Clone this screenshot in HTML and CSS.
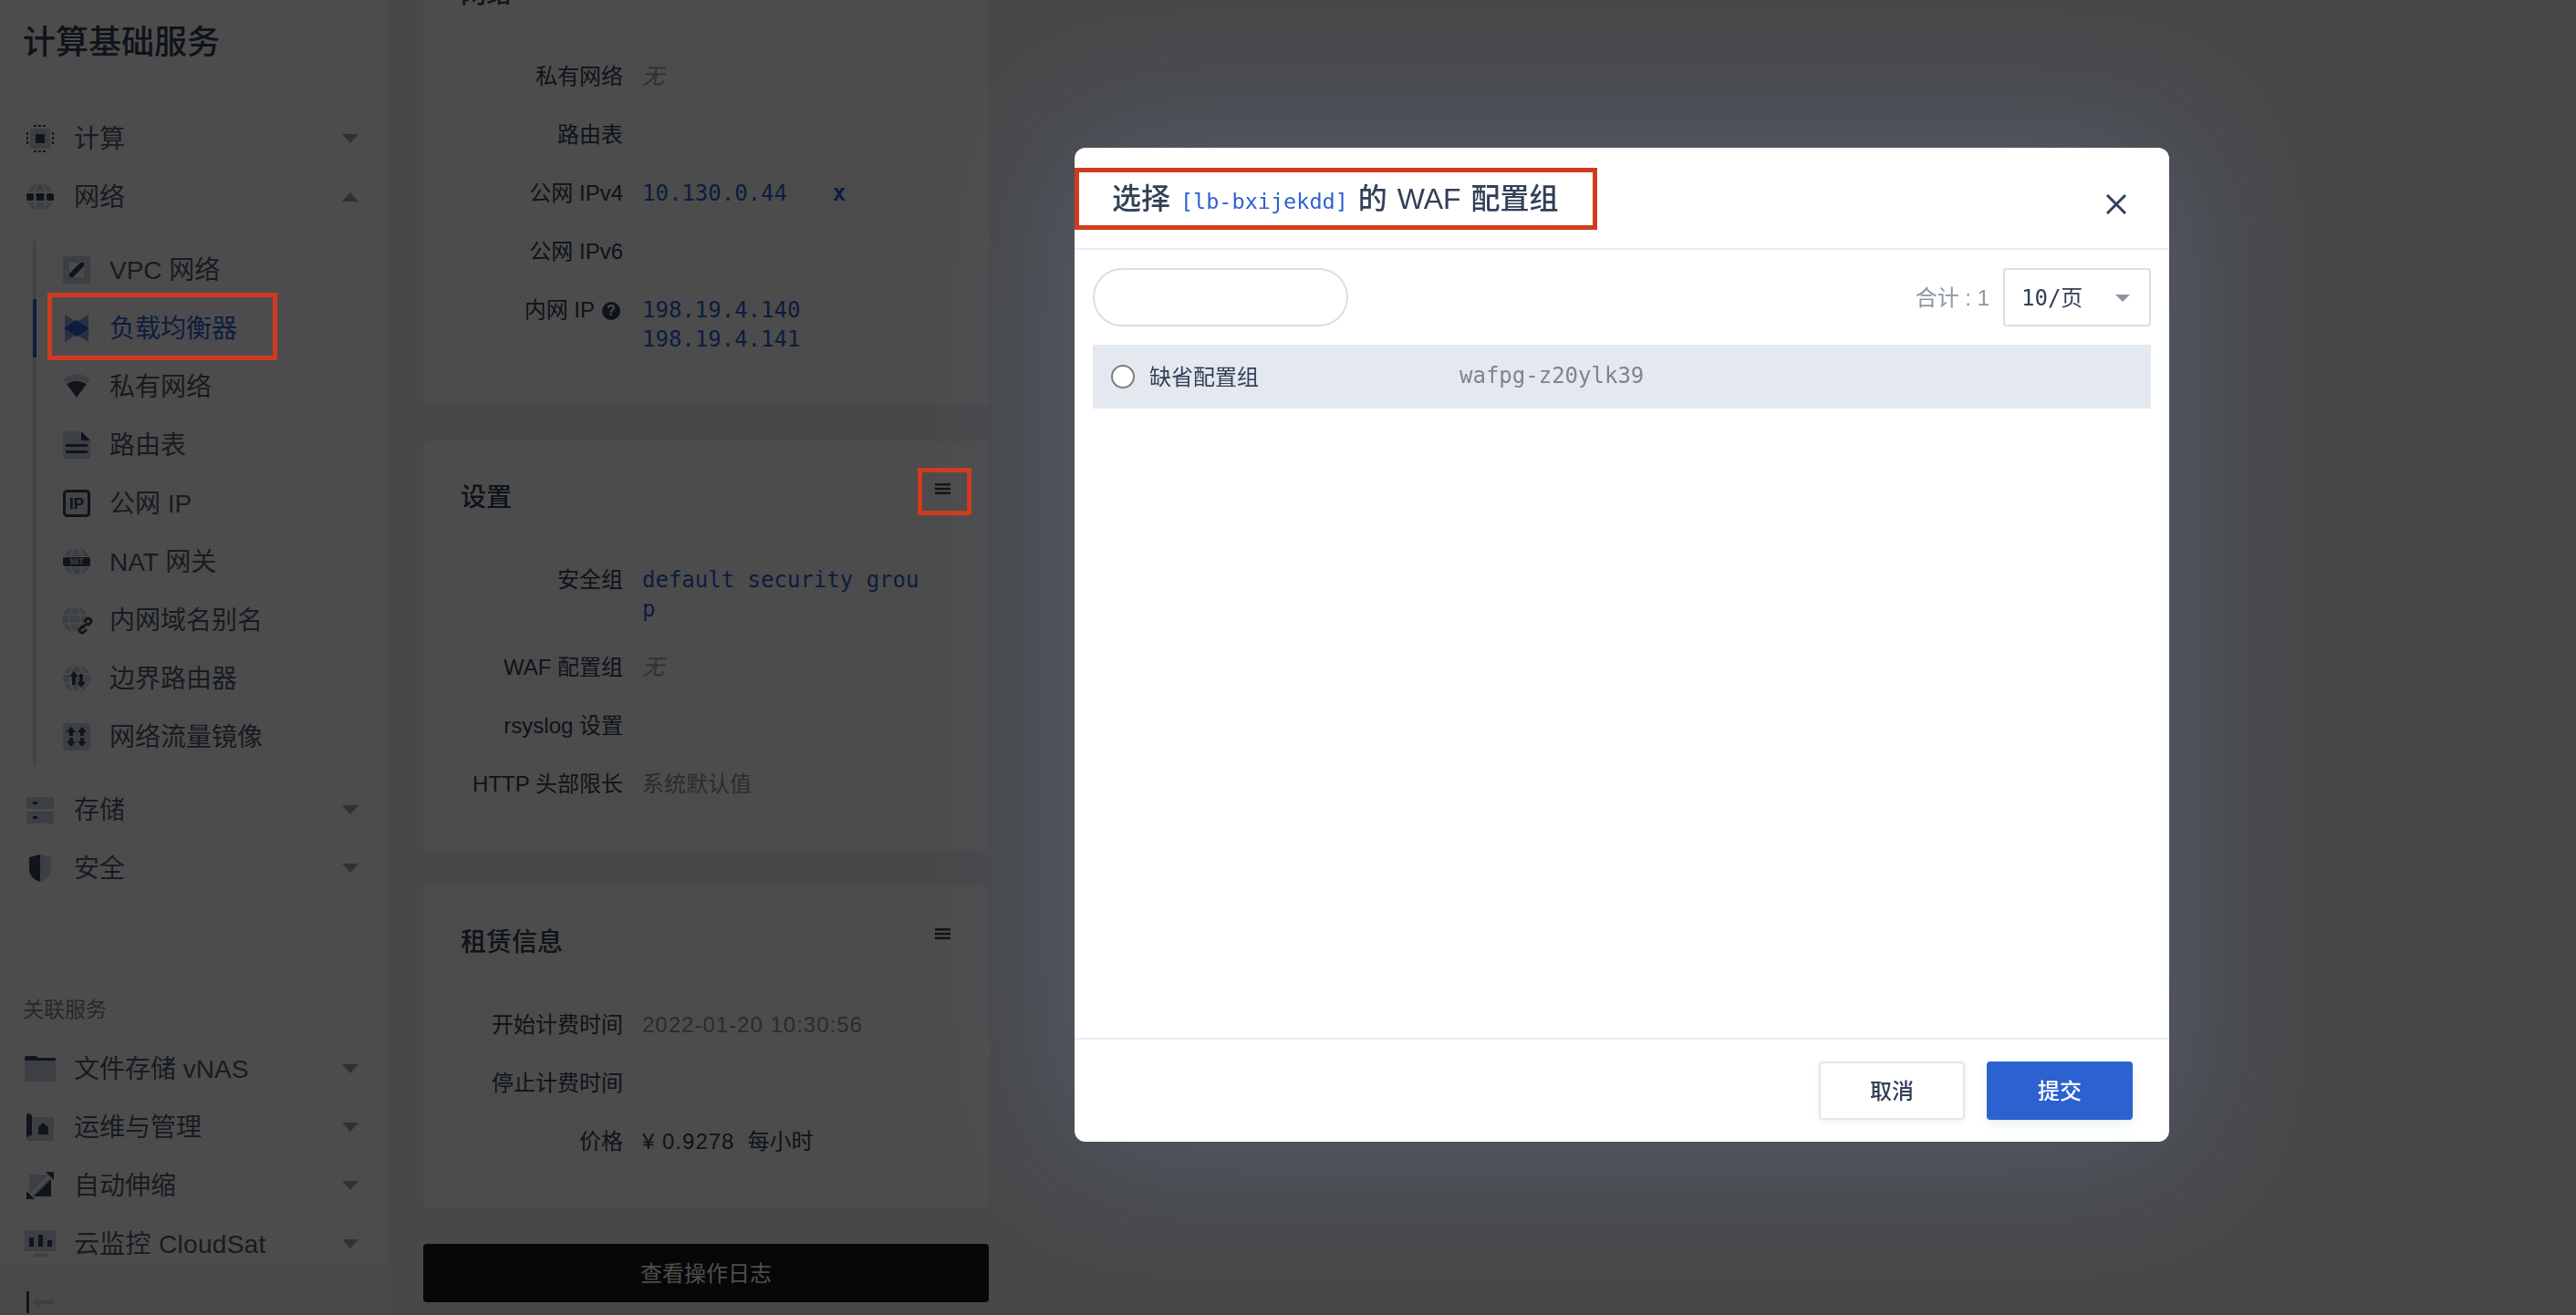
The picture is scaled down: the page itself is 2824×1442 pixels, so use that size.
FILE: index.html
```html
<!DOCTYPE html>
<html lang="zh-CN">
<head>
    <meta charset="UTF-8">
    <meta name="viewport" content="width=device-width, initial-scale=1.0">
    <title>负载均衡器</title>
    <link rel="stylesheet" href="styles.css">
</head>
<body>
    <svg class="defs" width="0" height="0">
        <symbol id="globe" viewBox="0 0 30 30">
            <circle cx="15" cy="15" r="15" class="lt"/>
            <ellipse cx="15" cy="15" rx="7" ry="15" fill="none" stroke="#fff" stroke-width="2"/>
            <path d="M0 10H30M0 20H30" stroke="#fff" stroke-width="2"/>
        </symbol>
    </svg>

    <div class="page">
        <aside class="sidebar">
            <h1 class="side-title">计算基础服务</h1>
            <nav>
                <div class="nav-item">
                    <svg class="icon" viewBox="0 0 30 30"><rect x="4" y="4" width="22" height="22" class="lt"/><rect x="10" y="10" width="10" height="10" class="dk"/><path class="dots" d="M8 1H23M8 29H23M1 8V23M29 8V23"/></svg>
                    <span class="nav-text">计算</span><i class="caret"></i>
                </div>
                <div class="nav-item">
                    <svg class="icon" viewBox="0 0 30 30"><use href="#globe"/><rect x="0" y="11" width="8" height="8" rx="2" class="dk"/><rect x="11" y="11" width="8" height="8" class="dk"/><rect x="22" y="11" width="8" height="8" rx="2" class="dk"/></svg>
                    <span class="nav-text">网络</span><i class="caret up"></i>
                </div>
                <div class="sub">
                    <div class="sub-item">
                        <svg class="icon" viewBox="0 0 30 30"><rect width="30" height="30" rx="2" class="lt"/><rect x="7" y="7" width="16" height="16" fill="#fff"/><path class="dk" d="M7 19L19 7H23V11L11 23H7Z"/></svg>
                        <span>VPC 网络</span>
                    </div>
                    <div class="sub-item active">
                        <svg class="icon" viewBox="0 0 30 30"><path fill="#2c62cf" opacity=".55" d="M2 0L15 8L28 0V30L15 22L2 30Z"/><path fill="#2c62cf" d="M1 15L15 6L29 15L15 24Z"/></svg>
                        <span>负载均衡器</span>
                        <b class="mark mark-nav"></b>
                    </div>
                    <div class="sub-item">
                        <svg class="icon" viewBox="0 0 30 30"><path class="lt" d="M0 6Q15 -3 30 6L27 11Q15 4 3 11Z"/><path class="dk" d="M4 12Q15 5 26 12L15 27Z"/></svg>
                        <span>私有网络</span>
                    </div>
                    <div class="sub-item">
                        <svg class="icon" viewBox="0 0 30 30"><path class="lt" d="M2 0H20L30 10V28Q30 30 28 30H2Q0 30 0 28V2Q0 0 2 0Z"/><path class="dk" d="M20 0L30 10H20Z"/><rect x="3" y="14" width="24" height="3" class="dk"/><rect x="3" y="21" width="24" height="3" class="dk"/></svg>
                        <span>路由表</span>
                    </div>
                    <div class="sub-item">
                        <svg class="icon" viewBox="0 0 30 30"><rect x="1.5" y="1.5" width="27" height="27" rx="3" fill="#dfe5ed" stroke="#324057" stroke-width="3"/><text x="15" y="21" class="icon-ip">IP</text></svg>
                        <span>公网 IP</span>
                    </div>
                    <div class="sub-item">
                        <svg class="icon" viewBox="0 0 30 30"><use href="#globe"/><rect x="0" y="10" width="30" height="10" rx="2" class="dk"/><text x="15" y="18" class="icon-nat">NAT</text></svg>
                        <span>NAT 网关</span>
                    </div>
                    <div class="sub-item">
                        <svg class="icon" viewBox="0 0 30 30"><use href="#globe" width="28" height="28" x="-1"/><path class="link" d="M23 17L26 14Q28 12 30 14T30 18L27 21M22 21L19 24Q17 26 19 28T23 28L26 25M21 24L27 18"/></svg>
                        <span>内网域名别名</span>
                    </div>
                    <div class="sub-item">
                        <svg class="icon" viewBox="0 0 30 30"><use href="#globe"/><path class="dk" d="M11 6L16 12H13V21H9V12H6Z" transform="translate(1 1)"/><path class="dk" d="M17 9H21V18H24L19 24L14 18H17Z" transform="translate(1 1)"/></svg>
                        <span>边界路由器</span>
                    </div>
                    <div class="sub-item">
                        <svg class="icon" viewBox="0 0 30 30"><rect width="30" height="30" rx="4" class="lt"/><path class="dk" d="M9 4L14 10H11V14H7V10H4ZM21 4L26 10H23V14H19V10H16ZM7 16H11V20H14L9 26L4 20H7ZM19 16H23V20H26L21 26L16 20H19Z"/></svg>
                        <span>网络流量镜像</span>
                    </div>
                </div>
                <div class="nav-item">
                    <svg class="icon" viewBox="0 0 30 30"><rect y="1" width="30" height="13" rx="1" class="lt"/><rect y="17" width="30" height="13" rx="1" class="lt"/><rect x="7" y="6" width="5" height="3" class="dk"/><rect x="7" y="22" width="5" height="3" class="dk"/></svg>
                    <span class="nav-text">存储</span><i class="caret"></i>
                </div>
                <div class="nav-item">
                    <svg class="icon" viewBox="0 0 30 30"><path class="dk" d="M3 3L15 0V30Q3 26 3 16Z"/><path class="lt" d="M15 0L27 3V16Q27 26 15 30Z"/></svg>
                    <span class="nav-text">安全</span><i class="caret"></i>
                </div>
            </nav>
            <div class="related">
                <div class="related-label">关联服务</div>
                <div class="nav-item">
                    <svg class="icon" viewBox="0 0 30 30"><path class="lt" d="M-2 5H32V27Q32 29 30 29H0Q-2 29 -2 27Z"/><path class="dk" d="M-2 3Q-2 1 0 1H10L13 3H32V6H-2Z"/></svg>
                    <span class="nav-text">文件存储 vNAS</span><i class="caret"></i>
                </div>
                <div class="nav-item">
                    <svg class="icon" viewBox="0 0 30 30"><path class="lt" d="M6 4H30V30H4Q0 30 0 26V20Z"/><path class="dk" d="M2 0Q6 0 6 4V24Q2 24 0 27V2Q0 0 2 0Z"/><path class="dk" d="M18 10L24 15V23H13V15Z"/></svg>
                    <span class="nav-text">运维与管理</span><i class="caret"></i>
                </div>
                <div class="nav-item">
                    <svg class="icon" viewBox="0 0 30 30"><rect x="3" y="3" width="24" height="24" rx="1" class="lt"/><path fill="#fff" d="M0 28L28 0H30V2L2 30H0Z"/><path class="dk" d="M27 8V27H8Z"/><path class="dk" d="M21 0H30V9Z"/><path class="dk" d="M0 21V30H9Z"/></svg>
                    <span class="nav-text">自动伸缩</span><i class="caret"></i>
                </div>
                <div class="nav-item">
                    <svg class="icon" viewBox="0 0 30 30"><rect x="-2" y="0" width="34" height="23" class="lt"/><rect x="8" y="26" width="16" height="3" class="lt"/><rect x="3" y="8" width="5" height="10" class="dk"/><rect x="13" y="5" width="5" height="13" class="dk"/><rect x="23" y="11" width="5" height="7" class="dk"/></svg>
                    <span class="nav-text cloudsat">云监控 CloudSat</span><i class="caret"></i>
                </div>
            </div>
            <div class="side-foot">
                <svg class="icon" viewBox="0 0 30 24"><rect x="0" y="0" width="3" height="24" class="dk"/><path class="lt" d="M7 12L14 6V10H30V14H14V18Z"/></svg>
            </div>
        </aside>

        <main class="content">
            <section class="card card-first">
                <div class="card-head"><h2>网络</h2></div>
                <div class="row"><div class="label">私有网络</div><div class="value none">无</div></div>
                <div class="row"><div class="label">路由表</div><div class="value"></div></div>
                <div class="row"><div class="label">公网 IPv4</div><div class="value mono">10.130.0.44<span class="unbind">x</span></div></div>
                <div class="row"><div class="label">公网 IPv6</div><div class="value"></div></div>
                <div class="row"><div class="label">内网 IP<span class="help">?</span></div><div class="value mono">198.19.4.140<br>198.19.4.141</div></div>
            </section>

            <section class="card">
                <div class="card-head">
                    <h2>设置</h2>
                    <div class="menu">
                        <svg width="17" height="12" viewBox="0 0 17 12"><path d="M0 0H17V2.5H0ZM0 4.8H17V7.2H0ZM0 9.5H17V12H0Z"/></svg>
                        <b class="mark mark-menu"></b>
                    </div>
                </div>
                <div class="row"><div class="label">安全组</div><div class="value mono">default security group</div></div>
                <div class="row"><div class="label">WAF 配置组</div><div class="value none">无</div></div>
                <div class="row"><div class="label">rsyslog 设置</div><div class="value"></div></div>
                <div class="row"><div class="label">HTTP 头部限长</div><div class="value muted">系统默认值</div></div>
            </section>

            <section class="card">
                <div class="card-head">
                    <h2>租赁信息</h2>
                    <div class="menu">
                        <svg width="17" height="12" viewBox="0 0 17 12"><path d="M0 0H17V2.5H0ZM0 4.8H17V7.2H0ZM0 9.5H17V12H0Z"/></svg>
                    </div>
                </div>
                <div class="row"><div class="label">开始计费时间</div><div class="value muted date">2022-01-20 10:30:56</div></div>
                <div class="row"><div class="label">停止计费时间</div><div class="value"></div></div>
                <div class="row"><div class="label">价格</div><div class="value price"><span class="amount">¥ 0.9278</span>每小时</div></div>
            </section>

            <button class="log-btn" type="button">查看操作日志</button>
        </main>
    </div>

    <div class="overlay">
        <div class="modal">
            <header class="modal-head">
                <h3>选择 <code>[lb-bxijekdd]</code> 的 WAF 配置组</h3>
                <svg class="close" width="22" height="22" viewBox="0 0 22 22"><path d="M1 1L21 21M21 1L1 21"/></svg>
                <b class="mark mark-title"></b>
            </header>
            <div class="modal-body">
                <div class="toolbar">
                    <input class="search" type="text">
                    <span class="total">合计 : 1</span>
                    <div class="select"><span>10/页</span><i class="select-arrow"></i></div>
                </div>
                <div class="list-row">
                    <span class="radio"></span>
                    <span class="list-name">缺省配置组</span>
                    <span class="list-id">wafpg-z20ylk39</span>
                </div>
            </div>
            <footer class="modal-foot">
                <button class="btn" type="button">取消</button>
                <button class="btn primary" type="button">提交</button>
            </footer>
        </div>
    </div>
</body>
</html>
```

FILE: styles.css
```css
* {
    box-sizing: border-box;
}

html, body {
    margin: 0;
    height: 100%;
    overflow: hidden;
}

body {
    font-family: "Liberation Sans", "Noto Sans CJK SC", sans-serif;
    font-size: 24px;
    color: #324057;
    background-color: #eef0f6;
}

h1, h2, h3 {
    margin: 0;
}

.defs {
    position: absolute;
}

.lt {
    fill: #c8d2e0;
}

.dk {
    fill: #3a475c;
}

.dots {
    fill: none;
    stroke: #3a475c;
    stroke-width: 2;
    stroke-dasharray: 3 2;
}

.link {
    fill: none;
    stroke: #3a475c;
    stroke-width: 3;
}

.icon-ip {
    font: bold 17px "Liberation Sans", sans-serif;
    text-anchor: middle;
    fill: #324057;
}

.icon-nat {
    font: bold 8px "DejaVu Sans Mono", monospace;
    text-anchor: middle;
    fill: #c8d2e0;
}

.page {
    display: flex;
    height: 1442px;
}

/* sidebar */
.sidebar {
    position: relative;
    flex: 0 0 424px;
    height: 100%;
    background-color: #fff;
}

.side-title {
    height: 120px;
    padding: 24px 0 0 25px;
    font-size: 36px;
    line-height: 46px;
    font-weight: 500;
}

.icon {
    flex: 0 0 30px;
    width: 30px;
    height: 30px;
    overflow: visible;
}

.nav-item {
    display: flex;
    align-items: center;
    height: 64px;
    padding: 0 31px 0 29px;
    font-size: 28px;
    color: #505c70;
}

.nav-text {
    flex: 1;
    margin: 0 0 4px 22px;
}

.cloudsat {
    letter-spacing: 0.3px;
}

.caret {
    width: 0;
    height: 0;
    border-left: 9px solid transparent;
    border-right: 9px solid transparent;
    border-top: 10px solid #a3a6aa;
}

.caret.up {
    border-top: 0;
    border-bottom: 10px solid #a3a6aa;
}

.sub {
    margin: 16px 0 16px 36px;
}

.sub-item {
    display: flex;
    align-items: center;
    gap: 21px;
    height: 64px;
    padding-left: 29px;
    border-left: 4px solid #d9e2e9;
    font-size: 28px;
    color: #505c70;
}

.sub-item span {
    margin-bottom: 4px;
}

.sub-item.active {
    position: relative;
    border-left-color: #2c62cf;
    color: #2c62cf;
}

.related {
    margin-top: 91px;
    padding-top: 14px;
    border-top: 2px solid #f0f2f5;
}

.related-label {
    margin-bottom: 17px;
    padding-left: 25px;
    line-height: 32px;
    font-size: 23px;
    color: #7d8794;
}

.side-foot {
    position: absolute;
    left: 0;
    right: 0;
    bottom: 0;
    height: 54px;
    padding: 28px 0 0 29px;
    background-color: #f5f6f8;
}

.side-foot .icon {
    height: 24px;
    display: block;
}

/* right column */
.content {
    flex: 0 0 660px;
    padding-left: 40px;
}

.card {
    width: 620px;
    margin-bottom: 40px;
    padding: 39px 42px 41px 41px;
    background-color: #fff;
    border-radius: 4px;
}

.card-first {
    margin-top: -68px;
}

.card-head {
    display: flex;
    justify-content: space-between;
    height: 40px;
    margin-bottom: 40px;
}

.card-head h2 {
    margin-top: 3px;
    font-size: 28px;
    line-height: 40px;
    font-weight: 500;
}

.menu {
    position: relative;
    width: 17px;
    height: 12px;
    margin-top: 7px;
}

.menu svg {
    display: block;
    fill: #324057;
}

.row {
    display: flex;
    padding: 17px 0 15px;
    line-height: 32px;
}

.label {
    flex: 0 0 178px;
    text-align: right;
    white-space: nowrap;
}

.value {
    width: 310px;
    margin-left: 21px;
    min-height: 32px;
    word-break: break-all;
}

.mono {
    font-family: "DejaVu Sans Mono", "Noto Sans CJK SC", monospace;
    color: #2c62cf;
}

.none {
    font-style: italic;
    color: #98a0ac;
}

.muted {
    color: #8a94a1;
}

.date {
    letter-spacing: 1px;
}

.amount {
    margin-right: 14px;
    letter-spacing: 1px;
}

.unbind {
    display: inline-block;
    width: 32px;
    margin-left: 41px;
    text-align: center;
    font-weight: bold;
    background-color: #fafbfc;
    border-radius: 4px;
}

.help {
    display: inline-block;
    width: 20px;
    height: 20px;
    margin: 0 3px 0 8px;
    border-radius: 50%;
    background-color: #324057;
    color: #fff;
    font-size: 16px;
    font-weight: bold;
    line-height: 20px;
    text-align: center;
    vertical-align: 2px;
}

.log-btn {
    display: block;
    width: 620px;
    height: 64px;
    padding: 0 0 3px;
    border: none;
    border-radius: 4px;
    background-color: #15181f;
    color: #fff;
    font: inherit;
}

/* dialog */
.overlay {
    position: fixed;
    top: 0;
    left: 0;
    right: 0;
    bottom: 0;
    z-index: 10;
    padding: 162px 0 0 1178px;
    background-color: rgba(0, 0, 0, 0.7);
}

.modal {
    position: relative;
    display: flex;
    flex-direction: column;
    width: 1200px;
    height: 1090px;
    background-color: #fff;
    border-radius: 12px;
    box-shadow: 0 0 160px rgba(130, 165, 220, 0.25);
}

.modal-head {
    display: flex;
    justify-content: space-between;
    flex: 0 0 112px;
    padding: 33px 47px 0 41px;
    border-bottom: 2px solid #e6ebf2;
}

.modal-head h3 {
    font-size: 32px;
    line-height: 46px;
    font-weight: 500;
    word-spacing: 2px;
}

.modal-head code {
    font-family: "DejaVu Sans Mono", monospace;
    font-size: 23.5px;
    font-weight: normal;
    color: #2c62cf;
}

.close {
    margin-top: 18px;
    fill: none;
    stroke: #324057;
    stroke-width: 3;
}

.modal-body {
    flex: 1;
    padding: 20px 20px 0;
}

.toolbar {
    display: flex;
    align-items: center;
    height: 64px;
    margin-bottom: 20px;
}

.search {
    width: 280px;
    height: 64px;
    margin-right: auto;
    border: 2px solid #d8dfe9;
    border-radius: 32px;
    background-color: #fff;
}

.total {
    margin: 0 15px 3px 0;
    color: #8b95a1;
}

.select {
    display: flex;
    align-items: center;
    justify-content: space-between;
    width: 162px;
    height: 64px;
    padding: 0 21px 0 18px;
    border: 2px solid #d8dfe9;
    border-radius: 4px;
    font-family: "DejaVu Sans Mono", "Noto Sans CJK SC", monospace;
}

.select span {
    margin-bottom: 4px;
}

.select-arrow {
    width: 0;
    height: 0;
    margin-top: 2px;
    border-left: 8px solid transparent;
    border-right: 8px solid transparent;
    border-top: 8px solid #8b95a1;
}

.list-row {
    display: flex;
    align-items: center;
    height: 70px;
    padding-left: 20px;
    background-color: #e4e8ef;
}

.radio {
    width: 26px;
    height: 26px;
    border: 2px solid #7d7d7d;
    border-radius: 50%;
    background-color: #fff;
}

.list-name {
    width: 340px;
    margin: 0 0 3px 16px;
}

.list-id {
    font-family: "DejaVu Sans Mono", monospace;
    color: #7d8590;
    margin-bottom: 2px;
}

.modal-foot {
    display: flex;
    justify-content: flex-end;
    gap: 24px;
    flex: 0 0 114px;
    padding: 24px 40px 0 0;
    border-top: 2px solid #e6ebf2;
}

.btn {
    width: 160px;
    height: 64px;
    padding: 0 0 3px;
    border: 2px solid #e2e7ef;
    border-radius: 4px;
    background-color: #fff;
    color: #324057;
    font: inherit;
    font-weight: 500;
    box-shadow: 0 2px 6px rgba(50, 64, 87, 0.08);
}

.btn.primary {
    border: none;
    background-color: #2c62cf;
    color: #fff;
    box-shadow: 0 4px 10px rgba(44, 140, 120, 0.12);
}

/* red boxes drawn on top of the screenshot */
.mark {
    position: absolute;
    z-index: 20;
    border: 5px solid #d03b20;
}

.mark-nav {
    left: 12px;
    top: -7px;
    width: 252px;
    height: 74px;
}

.mark-menu {
    left: -19px;
    top: -17px;
    width: 59px;
    height: 52px;
}

.mark-title {
    left: 0;
    top: 22px;
    width: 573px;
    height: 68px;
}
```
